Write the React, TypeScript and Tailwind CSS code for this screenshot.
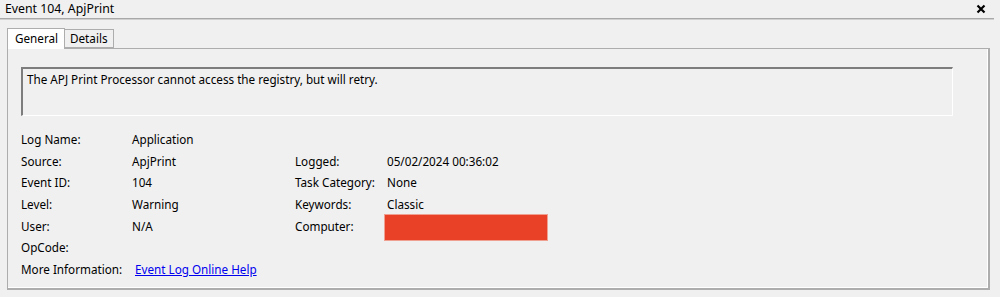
const font = "font-['Segoe_UI','Noto_Sans','Open_Sans',sans-serif]";

type Field = { label: string; value?: string; label2?: string; value2?: string; redacted?: boolean; link?: boolean };

const fields: Field[] = [
	{ label: "Log Name:", value: "Application" },
	{ label: "Source:", value: "ApjPrint", label2: "Logged:", value2: "05/02/2024 00:36:02" },
	{ label: "Event ID:", value: "104", label2: "Task Category:", value2: "None" },
	{ label: "Level:", value: "Warning", label2: "Keywords:", value2: "Classic" },
	{ label: "User:", value: "N/A", label2: "Computer:", redacted: true },
	{ label: "OpCode:" },
	{ label: "More Information:", value: "Event Log Online Help", link: true },
];

function CloseIcon() {
	return (
		<svg width="10" height="10" viewBox="0 0 10 10">
			<path d="M1.5 1.5 L8.5 8.5 M8.5 1.5 L1.5 8.5" stroke="#000" strokeWidth="2.2" />
		</svg>
	);
}

export default function App() {
	return (
		<div className={`w-[1000px] h-[297px] bg-[#f0f0f0] text-[11.7px] text-black ${font} overflow-hidden`}>
			{/* title bar */}
			<div className="flex items-center justify-between h-[18px] pl-[5px] pr-[14px]">
				<span className="leading-[18px] text-[12.3px]">Event 104, ApjPrint</span>
				<CloseIcon />
			</div>
			<div className="w-[994px] h-[2px] bg-[#a8a8a8] border-b border-[#d0d0d0]" />

			{/* tabs */}
			<div className="flex items-end pl-[7px] mt-[7px] h-[21px]">
				<div className="h-[21px] w-[58px] bg-white border border-b-0 border-[#adadad] px-[7px] leading-[19px] relative z-10 -mb-px">
					General
				</div>
				<div className="h-[19px] w-[49px] bg-[#f0f0f0] border border-l-0 border-[#adadad] px-[5px] leading-[17px]">
					Details
				</div>
			</div>

			{/* panel */}
			<div className="ml-[7px] w-[983px] h-[242px] border-l border-t border-r-2 border-b-2 border-[#adadad] shadow-[inset_-1px_-1px_0_#fff] px-[13px] pt-[18px]">
				<div className="h-[49px] w-[932px] border-t-2 border-l-2 border-[#7d7d7d] border-r border-b border-r-white border-b-white pl-[4px] pt-[2px] leading-[16px]">
					The APJ Print Processor cannot access the registry, but will retry.
				</div>

				<div className="grid grid-cols-[111px_164px_91px_1fr] auto-rows-[21.7px] mt-[13px] leading-[21.7px]">
					{fields.map((f) => (
						<div key={f.label} className="contents">
							<div>{f.label}</div>
							<div>
								{f.link ? (
									<span className="ml-[3px] text-[#0000ee] underline">{f.value}</span>
								) : (
									f.value ?? ""
								)}
							</div>
							<div className="-ml-[1px]">{f.label2 ?? ""}</div>
							<div>
								{f.redacted ? (
									<div className="-ml-[3px] mt-[-2px] h-[27px] w-[164px] bg-[#e94127] border border-[#f0a090]" />
								) : (
									f.value2 ?? ""
								)}
							</div>
						</div>
					))}
				</div>
			</div>
		</div>
	);
}
